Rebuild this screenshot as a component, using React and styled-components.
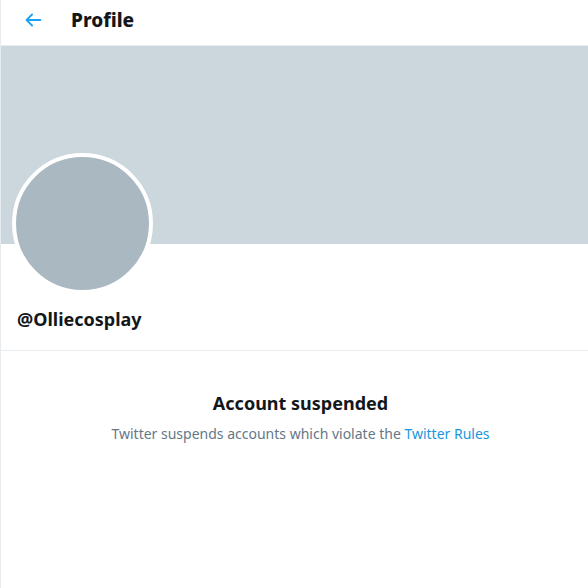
import React from "react";
import styled, { createGlobalStyle } from "styled-components";

const GlobalStyle = createGlobalStyle`
  html, body {
    margin: 0;
    padding: 0;
    background: #fff;
    overflow: hidden;
  }
  body {
    font-family: "Noto Sans", "Open Sans", sans-serif;
    color: #14171a;
  }
`;

function BackArrow() {
  return (
    <svg width="22" height="22" viewBox="0 0 24 24">
      <path
        fill="#1da1f2"
        d="M20 11H7.414l4.293-4.293a1 1 0 0 0-1.414-1.414l-6 6a1 1 0 0 0 0 1.414l6 6a.996.996 0 0 0 1.414 0 1 1 0 0 0 0-1.414L7.414 13H20a1 1 0 1 0 0-2z"
      />
    </svg>
  );
}

export default function App() {
  return (
    <>
      <GlobalStyle />
      <Column>
        <Header>
          <BackButton>
            <BackArrow />
          </BackButton>
          <Title>Profile</Title>
        </Header>
        <Banner />
        <ProfileInfo>
          <Avatar />
          <Handle>@Olliecosplay</Handle>
        </ProfileInfo>
        <Notice>
          <NoticeTitle>Account suspended</NoticeTitle>
          <NoticeText>
            Twitter suspends accounts which violate the{" "}
            <NoticeLink href="#">Twitter Rules</NoticeLink>
          </NoticeText>
        </Notice>
      </Column>
    </>
  );
}

const Column = styled.div`
  width: 600px;
  min-height: 588px;
  border-left: 1px solid #e6ecf0;
  box-sizing: border-box;
`;

const Header = styled.div`
  height: 46px;
  display: flex;
  align-items: center;
  padding: 0 15px 6px;
  box-sizing: border-box;
  border-bottom: 1px solid #e6ecf0;
`;

const BackButton = styled.div`
  width: 34px;
  height: 34px;
  display: flex;
  align-items: center;
  justify-content: center;
  margin-right: 21px;
`;

const Title = styled.h2`
  margin: 0;
  font-size: 19px;
  font-weight: 800;
  color: #14171a;
`;

const Banner = styled.div`
  height: 198px;
  background: #ccd6dd;
`;

const ProfileInfo = styled.div`
  padding: 0 15px 19px 11px;
  border-bottom: 1px solid #e6ecf0;
`;

const Avatar = styled.div`
  width: 133px;
  height: 133px;
  border-radius: 50%;
  border: 4px solid #fff;
  background: #aab8c2;
  margin-top: -91px;
`;

const Handle = styled.div`
  margin-top: 13px;
  margin-left: 5px;
  font-size: 18px;
  font-weight: 700;
  line-height: 24px;
`;

const Notice = styled.div`
  padding: 40px 15px 0;
  text-align: center;
`;

const NoticeTitle = styled.div`
  font-size: 18px;
  font-weight: 700;
  line-height: 24px;
`;

const NoticeText = styled.div`
  margin-top: 9px;
  font-size: 14px;
  line-height: 20px;
  color: #657786;
`;

const NoticeLink = styled.a`
  color: #1b95e0;
  text-decoration: none;
`;
